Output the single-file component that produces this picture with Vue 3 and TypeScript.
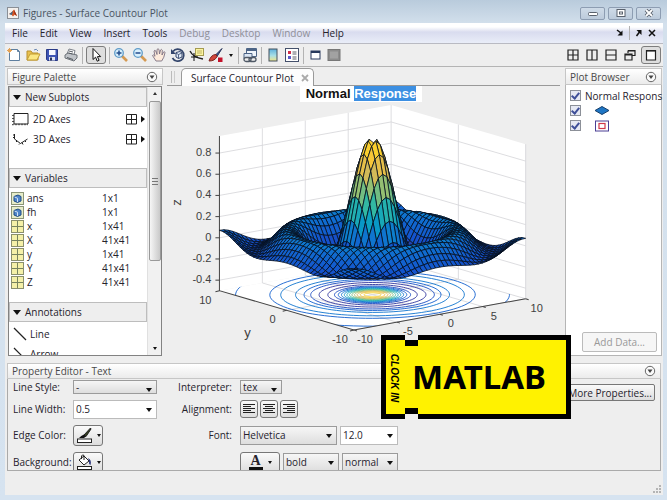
<script setup lang="ts">
import { ref } from 'vue'

type Point = [number, number]

const menus = [
  { label: 'File', off: false },
  { label: 'Edit', off: false },
  { label: 'View', off: false },
  { label: 'Insert', off: false },
  { label: 'Tools', off: false },
  { label: 'Debug', off: true },
  { label: 'Desktop', off: true },
  { label: 'Window', off: true },
  { label: 'Help', off: false },
]

const variables = [
  { name: 'ans', size: '1x1', kind: 'cube' },
  { name: 'fh', size: '1x1', kind: 'cube' },
  { name: 'x', size: '1x41', kind: 'grid' },
  { name: 'X', size: '41x41', kind: 'grid' },
  { name: 'y', size: '1x41', kind: 'grid' },
  { name: 'Y', size: '41x41', kind: 'grid' },
  { name: 'Z', size: '41x41', kind: 'grid' },
]

const showAxes = ref(true)
const showSurface = ref(true)
const showContour = ref(true)

/* Orthographic projection of the axes box */
const zFloor = -0.5
const zTop = 0.96
function project(x: number, y: number, z: number): Point {
  return [
    371.5 + x * 8.55 - y * 6.7,
    294 - x * 1.55 - y * 1.95 - (z - zFloor) * 105.5,
  ]
}
function fmt(points: Point[]): string {
  return points.map((p) => p[0].toFixed(2) + ',' + p[1].toFixed(2)).join(' ')
}

const parula: number[][] = [
  [53, 50, 150], [20, 82, 205], [16, 110, 208], [8, 158, 196],
  [48, 184, 164], [140, 191, 117], [217, 186, 86], [252, 200, 50], [250, 222, 36],
]
function colour(z: number): string {
  const t = Math.max(0, Math.min(0.999, (z + 0.22) / 1.2)) * 8
  const i = Math.floor(t)
  const f = t - i
  const c = parula[i].map((v, k) => Math.round(v + (parula[i + 1][k] - v) * f))
  return `rgb(${c[0]},${c[1]},${c[2]})`
}

function sinc(x: number, y: number): number {
  const r = Math.hypot(x, y)
  return Math.sin(r) / r
}

/* Surface faces, farthest first; the four around the undefined origin drop out */
const faces: { pts: string; fill: string; depth: number }[] = []
for (let i = 0; i < 40; i++) {
  for (let j = 0; j < 40; j++) {
    const x0 = -10 + i * 0.5
    const y0 = -10 + j * 0.5
    const corners: Point[] = [[x0, y0], [x0 + 0.5, y0], [x0 + 0.5, y0 + 0.5], [x0, y0 + 0.5]]
    const zs = corners.map((c) => sinc(c[0], c[1]))
    if (zs.some((z) => Number.isNaN(z))) continue
    faces.push({
      pts: fmt(corners.map((c, k) => project(c[0], c[1], zs[k]))),
      fill: colour(zs.reduce((a, b) => a + b, 0) / 4),
      depth: x0 * 6.7 + y0 * 8.55,
    })
  }
}
faces.sort((a, b) => b.depth - a.depth)

/* Contour radii: crossings of sin(r)/r with each level */
const rings: { pts: string; stroke: string }[] = []
for (let n = -2; n <= 9; n++) {
  const level = n / 10
  for (let r = 0.05; r < 14; r += 0.01) {
    const a = Math.sin(r) / r - level
    const b = Math.sin(r + 0.01) / (r + 0.01) - level
    if (a * b < 0) {
      const pts: Point[] = []
      for (let k = 0; k <= 90; k++) {
        const t = (k / 90) * Math.PI * 2
        pts.push(project(r * Math.cos(t), r * Math.sin(t), zFloor))
      }
      rings.push({ pts: fmt(pts), stroke: colour(level) })
    }
  }
}

const box = (list: number[][]) => fmt(list.map((p) => project(p[0], p[1], p[2])))
const floor = box([[-10, -10, zFloor], [10, -10, zFloor], [10, 10, zFloor], [-10, 10, zFloor]])
const leftWall = box([[-10, 10, zFloor], [10, 10, zFloor], [10, 10, zTop], [-10, 10, zTop]])
const rightWall = box([[10, 10, zFloor], [10, -10, zFloor], [10, -10, zTop], [10, 10, zTop]])

const levels = [-0.4, -0.2, 0, 0.2, 0.4, 0.6, 0.8]
const gridLines: string[] = [
  ...levels.map((z) => box([[-10, 10, z], [10, 10, z], [10, -10, z]])),
  ...[-5, 0, 5, 10].map((x) => box([[x, -10, zFloor], [x, 10, zFloor], [x, 10, zTop]])),
  ...[0, -10].map((y) => box([[-10, y, zFloor], [10, y, zFloor], [10, y, zTop]])),
]
const zTicks = levels.map((z) => {
  const p = project(-10, 10, z)
  return { text: String(z), x: p[0], y: p[1] }
})
const xTicks = [-10, -5, 0, 5, 10].map((x) => {
  const p = project(x, -10, zFloor)
  return { text: String(x), x: p[0], y: p[1] }
})
const yTicks = [-10, 0, 10].map((y) => {
  const p = project(-10, y, zFloor)
  return { text: String(y), x: p[0], y: p[1] }
})
const axisLine = box([[-10, 10, zTop], [-10, 10, zFloor], [-10, -10, zFloor], [10, -10, zFloor]])
</script>

<template>
  <div class="window">
    <header class="titlebar">
      <svg class="logo" viewBox="0 0 12 12"><rect x=".5" y=".5" width="11" height="11" fill="#f4f1ee" stroke="#8a8f96" /><path d="M2 7l2.300-1.500L7 2.500 10 9 7.500 7.800 6 9.500 4.500 7.800z" fill="#d9541e" /><path d="M2 7l2.300-1.500L6 4 5 8z" fill="#3d6a8c" /><path d="M7 2.500L10 9 7.600 7z" fill="#8a2414" /></svg>
      <h1>Figures - Surface Countour Plot</h1>
      <div class="winbtns">
        <button aria-label="Minimize"><svg viewBox="0 0 12 10"><rect x="1.500" y="4.500" width="9" height="3" rx="1" fill="#fff" stroke="#59616c" /></svg></button>
        <button aria-label="Maximize"><svg viewBox="0 0 12 10"><rect x="2" y="1.500" width="8" height="7" fill="#fff" stroke="#59616c" /><rect x="4.500" y="4" width="3" height="2" fill="none" stroke="#59616c" /></svg></button>
        <button aria-label="Close"><svg viewBox="0 0 12 10"><path d="M3 2l6 6M9 2L3 8" stroke="#59616c" stroke-width="3.600" /><path d="M3 2l6 6M9 2L3 8" stroke="#fff" stroke-width="1.800" /></svg></button>
      </div>
    </header>

    <div class="client">
      <nav class="menubar">
        <button v-for="m in menus" :key="m.label" :disabled="m.off">{{ m.label }}</button>
        <div class="menuright">
          <button aria-label="Dock"><svg viewBox="0 0 8 8"><path d="M1 1l4 3" stroke="#111" stroke-width="1.500" /><path d="M6.500 1.500v5h-5z" fill="#111" /></svg></button>
          <i class="sep"></i>
          <button aria-label="Undock"><svg viewBox="0 0 8 8"><path d="M1.500 7l3-4" stroke="#111" stroke-width="1.500" /><path d="M1.500 1h5v5z" fill="#111" /></svg></button>
          <button aria-label="Close figure"><svg viewBox="0 0 8 8"><path d="M1 1l6 6M7 1L1 7" stroke="#111" stroke-width="1.500" /></svg></button>
        </div>
      </nav>

      <div class="toolbar">
        <button aria-label="New"><svg viewBox="0 0 16 16"><path d="M3.500 2.500h8l2 2v9h-10z" fill="#fff" stroke="#5f7f9f" /><path d="M11.500 2.500v2h2" fill="none" stroke="#5f7f9f" /><path d="M3.500 1v5M1 3.500h5M2 2l3 3M5 2L2 5" stroke="#e5a355" /></svg></button>
        <button aria-label="Open"><svg viewBox="0 0 16 16"><path d="M2 13V4h4l1.500 2H13v7z" fill="#e9c04d" stroke="#b8902c" /><path d="M2 13l3-6h10l-3 6z" fill="#fbe782" stroke="#c39c33" /><path d="M9 3q2.500-2 4 1" fill="none" stroke="#6a88b4" /></svg></button>
        <button aria-label="Save"><svg viewBox="0 0 16 16"><path d="M2.500 2.500h11v11h-10l-1-1z" fill="#3d54b4" stroke="#2a3a86" /><rect x="5" y="3" width="6.500" height="5" fill="#f6f8ff" /><rect x="5" y="10" width="6" height="3.500" fill="#dfe4f2" /><rect x="6" y="10.500" width="2" height="3" fill="#26325f" /></svg></button>
        <button aria-label="Print"><svg viewBox="0 0 16 16"><path d="M4 7l2-5 6 1.500L11 8z" fill="#fff" stroke="#7b8088" /><path d="M2 8l3-2 9 2v3l-3 3-9-3z" fill="#bfc3c8" stroke="#6d7279" /><path d="M4 10.500l6 2M6 4l4 1M5.500 6l4 1" stroke="#555b63" /></svg></button>
        <i class="sep"></i>
        <button class="pressed" aria-label="Edit plot"><svg viewBox="0 0 16 16"><path d="M5 1.500v11l2.600-2.300 1.600 4 1.900-.9-1.700-3.700h3.300z" fill="#fff" stroke="#111" /></svg></button>
        <i class="sep"></i>
        <button aria-label="Zoom in"><svg viewBox="0 0 16 16"><path d="M9 9l5 5" stroke="#d59a52" stroke-width="2.600" /><circle cx="6" cy="6" r="4.300" fill="#d9f0fd" stroke="#5f9bc8" stroke-width="1.300" /><path d="M6 3.500v5M3.500 6h5" stroke="#234d8c" stroke-width="1.500" /></svg></button>
        <button aria-label="Zoom out"><svg viewBox="0 0 16 16"><path d="M9 9l5 5" stroke="#d59a52" stroke-width="2.600" /><circle cx="6" cy="6" r="4.300" fill="#d9f0fd" stroke="#5f9bc8" stroke-width="1.300" /><path d="M3.500 6h5" stroke="#234d8c" stroke-width="1.500" /></svg></button>
        <button aria-label="Pan"><svg viewBox="0 0 16 16"><path d="M5 14L1.500 8.500q1-1.500 2.500.8L3 4q1-1.500 1.800 0L6 7.500 6 2.500q1-1.500 2 0L8.500 7l1-4q1-1.300 1.800.2L11 8l1.500-3q1.500-.8 1.500.7-.8 5-3.300 8.300z" fill="#fdebdc" stroke="#7c6f80" stroke-width=".9" /></svg></button>
        <button aria-label="Rotate 3D"><svg viewBox="0 0 16 16"><path d="M3 4.500A6 6 0 1 1 2.500 11" fill="none" stroke="#34466c" stroke-width="1.700" /><path d="M1 2v5h5z" fill="#34466c" /><path d="M6 5.500l4-1 2 1.500v4l-3.500 1.500L6 10z" fill="#e3ecf8" stroke="#34466c" /><path d="M6 6l2.500 1.500L12 6M8.500 7.500v4" fill="none" stroke="#34466c" stroke-width=".8" /></svg></button>
        <button aria-label="Data cursor"><svg viewBox="0 0 16 16"><rect x="6.500" y="1.500" width="8" height="7" fill="#fbf4a0" stroke="#a59b50" /><path d="M8 4h5M8 6h5" stroke="#c0b468" /><path d="M1 4q3 6.500 13 8" fill="none" stroke="#222" stroke-width="1.400" /><path d="M5 6v8M2 10h7" stroke="#111" /></svg></button>
        <button aria-label="Brush"><svg viewBox="0 0 16 16"><path d="M14 1.500L7.500 8l1.500 1.500z" fill="#405a96" stroke="#26345a" /><path d="M8 7.500q-5 0-7 6.500 6 0 8-4.500z" fill="#d2453b" stroke="#7c2520" /><rect x="10" y="10.500" width="4.500" height="4.500" fill="#c4122b" /></svg></button>
        <button class="drop" aria-label="Brush options"><i class="tri"></i></button>
        <i class="sep"></i>
        <button aria-label="Link plot"><svg viewBox="0 0 16 16"><path d="M4.500 1.500h10v8h-10z" fill="#eef4fb" stroke="#4c6486" /><path d="M4.500 3h10" stroke="#4c6486" stroke-width="2" /><path d="M2 6.500h8v5H2z" fill="#dbe6f4" stroke="#4c6486" /><rect x="2" y="10.500" width="7" height="4" rx="2" fill="#eee" stroke="#4f5966" stroke-width="1.300" /><rect x="7" y="10.500" width="7" height="4" rx="2" fill="none" stroke="#4f5966" stroke-width="1.300" /></svg></button>
        <i class="sep"></i>
        <button aria-label="Colorbar"><svg viewBox="0 0 16 16"><defs><linearGradient id="bar" x1="0" y1="0" x2="0" y2="1"><stop offset="0" stop-color="#5eb0dd" /><stop offset=".55" stop-color="#a8dfe6" /><stop offset="1" stop-color="#f0e58a" /></linearGradient></defs><rect x="4" y="2" width="8" height="12" fill="url(#bar)" stroke="#45505c" /></svg></button>
        <button aria-label="Legend"><svg viewBox="0 0 16 16"><rect x="1.500" y="1.500" width="13" height="13" fill="#fff" stroke="#44506b" /><rect x="4" y="4" width="3" height="3" fill="#d02f4b" /><rect x="4" y="9" width="3" height="3" fill="#5858c8" /><path d="M8.500 5h4M8.500 7h4M8.500 10h4M8.500 12h4" stroke="#5d6066" /></svg></button>
        <i class="sep"></i>
        <button aria-label="Hide plot tools"><svg viewBox="0 0 16 16"><rect x="4" y="4" width="9" height="8" fill="#fff" stroke="#28395c" /><path d="M4 5h9" stroke="#28395c" stroke-width="2" /></svg></button>
        <button aria-label="Show plot tools"><svg viewBox="0 0 16 16"><rect x="2" y="2.500" width="12" height="11" fill="#8c8c8c" stroke="#777" /><rect x="4" y="4.500" width="8" height="7" fill="#a2a2a2" /></svg></button>
        <div class="layouts">
          <button aria-label="Tile"><svg viewBox="0 0 16 16"><path d="M3 3h10v10H3zM8 3v10M3 8h10" /></svg></button>
          <button aria-label="Left and right"><svg viewBox="0 0 16 16"><path d="M3 3h10v10H3zM8 3v10" /></svg></button>
          <button aria-label="Top and bottom"><svg viewBox="0 0 16 16"><path d="M3 3h10v10H3zM3 8h10" /></svg></button>
          <button aria-label="Float"><svg viewBox="0 0 16 16"><path d="M6 3.500h7v5h-3M6 3.500V6M6 4h7M3 7h7v6H3zM3 8h7" /></svg></button>
          <button class="pressed" aria-label="Maximize figure"><svg viewBox="0 0 16 16"><path d="M3.500 3.500h9v9.500h-9z" /><path d="M3.500 4h9" stroke-width="2" /></svg></button>
        </div>
      </div>

      <main class="dock">
        <section class="panel palette">
          <h2>Figure Palette<button class="roll" aria-label="Figure Palette actions"><svg viewBox="0 0 12 12"><circle cx="6" cy="6" r="4.700" /><path d="M3.500 4.500h5L6 8z" /></svg></button></h2>
          <div class="palbody">
            <div class="pallist">
              <h3><i class="tri big"></i>New Subplots</h3>
              <ul class="axes">
                <li>
                  <svg class="ax" viewBox="0 0 18 14"><path d="M2 1.500h14v10.500H2z" fill="#fff" stroke="#222" /><path d="M1 3v9.500h15" fill="none" stroke="#222" stroke-dasharray="1 2" stroke-width="1.500" /></svg>2D Axes
                  <button aria-label="Add 2D subplot grid"><svg viewBox="0 0 20 12"><path d="M1.500 1.500h10v9.500h-10zM6.500 1.500V11M1.500 6.500h10" fill="none" stroke="#222" /><path d="M16 3l4 3-4 3.500z" fill="#111" /></svg></button>
                </li>
                <li>
                  <svg class="ax" viewBox="0 0 18 14"><path d="M2.500 2v5l6 4.500 7-4.500" fill="none" stroke="#222" /><path d="M1 3h2M1 5.500h2M4 10l1-1M7 12.500l1-1M11 12.500l-1-2M14 10l-1-1" stroke="#222" /></svg>3D Axes
                  <button aria-label="Add 3D subplot grid"><svg viewBox="0 0 20 12"><path d="M1.500 1.500h10v9.500h-10zM6.500 1.500V11M1.500 6.500h10" fill="none" stroke="#222" /><path d="M16 3l4 3-4 3.500z" fill="#111" /></svg></button>
                </li>
              </ul>
              <h3><i class="tri big"></i>Variables</h3>
              <table>
                <tbody>
                  <tr v-for="v in variables" :key="v.name">
                    <td>
                      <svg v-if="v.kind === 'cube'" viewBox="0 0 13 13"><rect x=".5" y=".5" width="12" height="12" fill="#e7edc9" stroke="#8b9577" /><path d="M3 4.500L7 3l3 1.500v4.500L6.500 10.500 3 9z" fill="#4f86c9" stroke="#1f4a86" /><path d="M3.500 5l3 1.200V10" fill="none" stroke="#cfe1f7" /></svg>
                      <svg v-else viewBox="0 0 13 13"><rect x=".5" y=".5" width="12" height="12" fill="#f5f0a8" stroke="#8b8f6c" /><path d="M6.500 1v11M1 6.500h11" stroke="#77835f" /></svg>
                      {{ v.name }}
                    </td>
                    <td>{{ v.size }}</td>
                  </tr>
                </tbody>
              </table>
              <h3><i class="tri big"></i>Annotations</h3>
              <ul class="notes">
                <li><svg viewBox="0 0 14 14"><path d="M1 1l12 12" stroke="#222" stroke-width="1.200" /></svg>Line</li>
                <li><svg viewBox="0 0 14 14"><path d="M1 1l12 12M13 8v5H8" fill="none" stroke="#222" stroke-width="1.200" /></svg>Arrow</li>
              </ul>
            </div>
            <div class="scroll">
              <i class="tri up"></i>
              <div class="thumb"><i></i></div>
              <i class="tri"></i>
            </div>
          </div>
        </section>

        <section class="figure">
          <div class="tabs">
            <i class="grip"></i>
            <div class="tab">Surface Countour Plot<button aria-label="Close tab"><svg viewBox="0 0 8 8"><path d="M1 1l6 6M7 1L1 7" stroke="#aaa" stroke-width="1.800" /></svg></button></div>
            <i class="rule"></i>
          </div>
          <p class="plottitle"><span>Normal <mark>Response</mark></span></p>
          <svg class="plot" viewBox="164 102 398 253">
            <defs><clipPath id="floorclip"><polygon :points="floor" /></clipPath></defs>
            <g v-if="showAxes">
              <g fill="#fff">
                <polygon :points="floor" /><polygon :points="leftWall" /><polygon :points="rightWall" />
              </g>
              <polyline v-for="(g, i) in gridLines" :key="i" :points="g" class="grid" />
            </g>
            <g v-if="showContour" clip-path="url(#floorclip)">
              <polyline v-for="(r, i) in rings" :key="i" :points="r.pts" :stroke="r.stroke" class="ring" />
            </g>
            <polyline :points="axisLine" class="axis" />
            <g v-if="showSurface" class="surface">
              <polygon v-for="(f, i) in faces" :key="i" :points="f.pts" :fill="f.fill" />
            </g>
            <g class="ticks">
              <g v-for="t in zTicks" :key="t.text">
                <path :d="`M${t.x} ${t.y}h-4`" />
                <text :x="t.x - 8" :y="t.y + 3" text-anchor="end">{{ t.text }}</text>
              </g>
              <g v-for="t in xTicks" :key="t.text">
                <path :d="`M${t.x} ${t.y}l3 1`" />
                <text :x="t.x + 11" :y="t.y + 13" text-anchor="middle">{{ t.text }}</text>
              </g>
              <g v-for="t in yTicks" :key="t.text">
                <path :d="`M${t.x} ${t.y}l-4 1`" />
                <text :x="t.x - 14" :y="t.y + 13" text-anchor="middle">{{ t.text }}</text>
              </g>
              <text class="name" x="247" y="336" text-anchor="middle">y</text>
              <text class="name" transform="translate(181 202) rotate(-90)" text-anchor="middle">z</text>
            </g>
          </svg>
        </section>

        <section class="panel browser">
          <h2>Plot Browser<button class="roll" aria-label="Plot Browser actions"><svg viewBox="0 0 12 12"><circle cx="6" cy="6" r="4.700" /><path d="M3.500 4.500h5L6 8z" /></svg></button></h2>
          <div class="brbody">
            <label><input v-model="showAxes" type="checkbox" /><span>Normal Respons</span></label>
            <label><input v-model="showSurface" type="checkbox" aria-label="Surface" /><svg viewBox="0 0 16 12"><path d="M1 5.500L8 1.500l7 4-7 4z" fill="#1f76c4" stroke="#173f6b" /></svg></label>
            <label><input v-model="showContour" type="checkbox" aria-label="Contour" /><svg viewBox="0 0 16 12"><rect x="1.500" y="1" width="13" height="10" fill="#fff" stroke="#4a3f94" /><rect x="5" y="3.500" width="6" height="5" fill="none" stroke="#d0394a" stroke-width="1.200" /></svg></label>
            <button class="add" disabled>Add Data...</button>
          </div>
        </section>
      </main>

      <section class="panel editor">
        <h2>Property Editor - Text<button class="roll" aria-label="Property Editor actions"><svg viewBox="0 0 12 12"><circle cx="6" cy="6" r="4.700" /><path d="M3.500 4.500h5L6 8z" /></svg></button></h2>
        <div class="edbody">
          <div class="fields left">
            <label for="ls">Line Style:</label>
            <span class="sel short"><select id="ls"><option>-</option><option>--</option></select></span>
            <label for="lw">Line Width:</label>
            <span class="sel white"><select id="lw"><option>0.5</option><option>1.0</option></select></span>
            <label for="ec">Edge Color:</label>
            <button id="ec" class="pick"><svg viewBox="0 0 18 16"><path d="M14.500 1L8 8l2 1.500L15 2z" fill="#35401f" stroke="#222" /><path d="M8 7.500q-3 1-5 3.500h5l2-1.500z" fill="#111" /><rect x="1.500" y="12" width="14" height="3.500" fill="#fff" stroke="#222" /></svg><i class="tri"></i></button>
            <label for="bg">Background:</label>
            <button id="bg" class="pick"><svg viewBox="0 0 18 16"><path d="M3 6l5-4 5 5-5 4z" fill="#fff" stroke="#222" /><path d="M8 6V1.500Q6.500 0 5.500 2v3" fill="none" stroke="#222" /><path d="M12 4q4 2 2.500 7-2-1-1.500-4z" fill="#2a347c" /><rect x="1.500" y="12.500" width="14" height="3" fill="#fff" stroke="#222" /></svg><i class="tri"></i></button>
          </div>
          <div class="fields right">
            <label for="it">Interpreter:</label>
            <span class="sel short tex"><select id="it"><option>tex</option><option>none</option></select></span>
            <span class="lab">Alignment:</span>
            <div class="row tight">
              <button class="al" aria-label="Align left"><svg viewBox="0 0 14 12"><path d="M1 1.500h12M1 3.500h8M1 5.500h12M1 7.500h8M1 9.500h12" /></svg></button>
              <button class="al" aria-label="Align center"><svg viewBox="0 0 14 12"><path d="M1 1.500h12M3 3.500h8M1 5.500h12M3 7.500h8M1 9.500h12" /></svg></button>
              <button class="al" aria-label="Align right"><svg viewBox="0 0 14 12"><path d="M1 1.500h12M5 3.500h8M1 5.500h12M5 7.500h8M1 9.500h12" /></svg></button>
            </div>
            <label for="fn">Font:</label>
            <div class="row">
              <span class="sel font"><select id="fn"><option>Helvetica</option><option>Arial</option></select></span>
              <span class="sel white size"><select aria-label="Font size"><option>12.0</option><option>14.0</option></select></span>
            </div>
            <i></i>
            <div class="row">
              <button class="pick wide" aria-label="Text color"><b>A</b><i class="tri"></i></button>
              <span class="sel wt"><select aria-label="Font weight"><option>bold</option><option>normal</option></select></span>
              <span class="sel wt"><select aria-label="Font angle"><option>normal</option><option>italic</option></select></span>
            </div>
          </div>
          <button class="more">More Properties...</button>
        </div>
      </section>

      <footer class="status">
        <svg viewBox="0 0 10 10"><path d="M7 1h2v2H7zM7 4h2v2H7zM4 4h2v2H4zM7 7h2v2H7zM4 7h2v2H4zM1 7h2v2H1z" fill="#b4b4b4" /></svg>
      </footer>
    </div>

    <svg class="ticket" viewBox="0 0 190 84" role="img" aria-label="MATLAB clock in">
      <path d="M0 0H24V5H37V0H190V84H37V79H24V84H0z" fill="#000" />
      <path d="M5 5H24V11H37V5H185V79H37V73H24V79H5z" fill="#fff200" />
      <text class="tmain" x="98" y="54" text-anchor="middle">MATLAB</text>
      <text class="tside" transform="translate(10 43) rotate(90)" text-anchor="middle">CLOCK IN</text>
    </svg>
  </div>
</template>

<style>
body {
  margin: 0;
}
</style>

<style scoped>
* {
  box-sizing: border-box;
}
.window {
  position: relative;
  display: flex;
  flex-direction: column;
  min-height: 100vh;
  padding: 0 4px 5px 5px;
  background: linear-gradient(#b9cbdc, #d3e0ec 24px, #d6e3f0);
  font: 10px/14px "Open Sans", "Noto Sans", sans-serif;
  color: #26222c;
  overflow: hidden;
}
button, select {
  font: inherit;
  color: inherit;
}
button {
  display: flex;
  align-items: center;
  justify-content: center;
  padding: 0;
  border: 0;
  background: none;
}
h1, h2, h3, ul, p {
  margin: 0;
  padding: 0;
  font-size: 10px;
  font-weight: 400;
  list-style: none;
}
svg {
  display: block;
  flex: none;
}
.titlebar {
  display: flex;
  align-items: center;
  height: 23px;
  padding: 3px 2px 0 2px;
}
.logo {
  width: 12px;
  height: 12px;
}
.titlebar h1 {
  flex: 1;
  padding-left: 4px;
  color: #4a5462;
}
.winbtns {
  display: flex;
  gap: 3px;
}
.winbtns button {
  width: 25px;
  height: 13px;
  border: 1px solid #8d9db2;
  border-radius: 2px;
  background: linear-gradient(#cfdbe8, #bccbdb);
}
.winbtns svg {
  width: 12px;
  height: 10px;
}
.client {
  flex: 1;
  display: flex;
  flex-direction: column;
  background: #eee;
}
.menubar {
  display: flex;
  align-items: center;
  gap: 12px;
  height: 21px;
  padding: 0 7px;
  background: linear-gradient(#fff 20%, #d9dcef 45%, #e9edf8);
  border-bottom: 1px solid #b9bac2;
}
.menubar button:disabled {
  color: #8f8f98;
}
.menuright {
  display: flex;
  align-items: center;
  gap: 5px;
  margin-left: auto;
}
.menuright svg {
  width: 8px;
  height: 8px;
}
.sep {
  width: 1px;
  height: 17px;
  background: #b3b3b3;
}
.menuright .sep {
  height: 14px;
}
.toolbar {
  display: flex;
  align-items: center;
  gap: 3px;
  height: 23px;
  padding: 0 2px 0 1px;
  border-bottom: 1px solid #b4b4b4;
}
.toolbar svg {
  width: 16px;
  height: 16px;
}
.toolbar .pressed {
  width: 20px;
  height: 18px;
  border: 1px solid #7d7d7d;
  border-radius: 3px;
  background: #dedede;
}
.toolbar .drop {
  width: 8px;
}
.layouts {
  display: flex;
  align-items: center;
  gap: 3px;
  margin-left: auto;
}
.layouts path {
  fill: none;
  stroke: #222;
  stroke-width: 1.2;
}
.layouts .pressed path {
  fill: #fff;
}
.tri {
  width: 0;
  height: 0;
  border: solid transparent;
  border-width: 3px 2px 0;
  border-top-color: #111;
}
.tri.big {
  border-width: 5px 4px 0;
  border-top-color: #111;
}
.tri.up {
  border-width: 0 2px 3px;
  border-bottom-color: #333;
}
.dock {
  flex: 1;
  display: flex;
  padding: 1px 1px 0 2px;
}
.panel {
  display: flex;
  flex-direction: column;
}
.panel h2 {
  display: flex;
  align-items: center;
  justify-content: space-between;
  height: 17px;
  padding: 0 4px;
  border: 1px solid #c6c6c6;
  background: linear-gradient(#fff, #ebebeb);
  color: #494949;
}
.roll svg {
  width: 12px;
  height: 12px;
}
.roll circle {
  fill: #fafafa;
  stroke: #666;
}
.roll path {
  fill: #444;
}
.palette {
  width: 156px;
}
.palbody {
  flex: 1 1 0px;
  display: flex;
  min-height: 270px;
  max-height: 270px;
  margin: 1px 1px 0 1px;
  border: 1px solid #828282;
  background: #fff;
}
.pallist {
  flex: 1;
  overflow: hidden;
}
.pallist h3 {
  display: flex;
  align-items: center;
  gap: 4px;
  height: 20px;
  padding-left: 3px;
  border: 1px solid #bdbdbd;
  background: #eee;
}
.axes {
  padding: 2px 2px 0 3px;
  height: 61px;
}
.axes li {
  display: flex;
  align-items: center;
  gap: 3px;
  height: 20px;
}
.ax {
  width: 18px;
  height: 14px;
}
.axes button {
  margin-left: auto;
}
.axes button svg {
  width: 20px;
  height: 12px;
}
table {
  width: 100%;
  margin: 3px 0 13px;
  border-collapse: collapse;
}
td {
  width: 93px;
  height: 14px;
  padding: 0;
  line-height: 14px;
}
td:first-child {
  display: flex;
  align-items: center;
  gap: 3px;
  padding-left: 2px;
}
td svg {
  width: 13px;
  height: 13px;
}
.notes {
  padding: 2px 0 0 4px;
}
.notes li {
  display: flex;
  align-items: center;
  gap: 3px;
  height: 20px;
}
.notes svg {
  width: 14px;
  height: 14px;
}
.scroll {
  display: flex;
  flex-direction: column;
  align-items: center;
  justify-content: space-between;
  width: 14px;
  padding: 5px 0;
  background: #f1f1f1;
  border-left: 1px solid #e0e0e0;
}
.thumb {
  display: flex;
  align-items: center;
  justify-content: center;
  width: 12px;
  height: 160px;
  margin: 6px 0 auto;
  border: 1px solid #999;
  border-radius: 2px;
  background: linear-gradient(90deg, #f6f6f6, #c9c9c9);
}
.thumb i {
  width: 6px;
  height: 7px;
  background: repeating-linear-gradient(#777 0 1px, transparent 1px 3px);
}
.figure {
  flex: 1;
  display: flex;
  flex-direction: column;
  min-width: 0;
}
.tabs {
  display: flex;
  height: 18px;
  padding: 0 5px 0 4px;
}
.grip {
  width: 14px;
  border-bottom: 1px solid #999;
  background: linear-gradient(#bbb, #bbb) 4px 3px / 1px 12px no-repeat, linear-gradient(#ccc, #ccc) 7px 3px / 1px 12px no-repeat;
}
.tab {
  display: flex;
  align-items: center;
  gap: 7px;
  padding: 0 4px 0 9px;
  border: 1px solid #999;
  border-bottom: 0;
  border-radius: 5px 5px 0 0;
  background: #fdfdfd;
}
.tab svg {
  width: 8px;
  height: 8px;
}
.rule {
  flex: 1;
  border-bottom: 1px solid #999;
}
.plottitle {
  text-align: center;
  padding-right: 6px;
  font: bold 13px/16px "Liberation Sans", Arial, sans-serif;
  color: #111;
}
.plottitle span {
  display: inline-block;
  padding: 0 6px;
  background: #fff;
}
mark {
  background: #3c8fe2;
  color: #fff;
}
.plot {
  flex: 1 1 0px;
  width: 100%;
  height: 0;
  min-height: 253px;
}
.grid {
  fill: none;
  stroke: #d4d4d8;
  stroke-width: 0.8;
}
.ring {
  fill: none;
  stroke-width: 0.9;
}
.axis, .ticks path {
  fill: none;
  stroke: #444;
}
.surface {
  stroke: #06101f;
  stroke-width: 0.8;
  stroke-linejoin: round;
}
.ticks text {
  font: 11px "Liberation Sans", Arial, sans-serif;
  fill: #404040;
}
.ticks .name {
  font-size: 13px;
}
.browser {
  width: 97px;
}
.brbody {
  flex: 1;
  display: flex;
  flex-direction: column;
  padding: 3px 0 2px 4px;
  border: 1px solid #b5b5b5;
  border-top: 0;
  background: #fff;
}
.brbody label {
  display: flex;
  align-items: center;
  gap: 4px;
  height: 15px;
  white-space: nowrap;
}
.brbody label svg {
  width: 16px;
  height: 12px;
  margin-left: 9px;
}
.brbody input {
  appearance: none;
  flex: none;
  display: grid;
  place-items: center;
  width: 11px;
  height: 11px;
  margin: 0;
  border: 1px solid #8c9098;
  background: #e6e9f3;
}
.brbody input:checked::after {
  content: "";
  width: 3px;
  height: 6px;
  margin-bottom: 2px;
  border: solid #3f4f98;
  border-width: 0 2px 2px 0;
  transform: rotate(40deg);
}
.add {
  width: 75px;
  height: 20px;
  margin: auto 4px 1px auto;
  border: 1px solid #bbb;
  border-radius: 2px;
  background: #f6f6f6;
}
.add:disabled {
  color: #999;
}
.editor {
  margin: 7px 2px 0 2px;
}
.editor h2 {
  height: 16px;
}
.edbody {
  display: flex;
  align-items: flex-start;
  height: 92px;
  padding: 1px 5px 0;
  overflow: hidden;
  border: 1px solid #aaa;
  border-top: 0;
}
.fields {
  display: grid;
  grid-template-rows: 14px 20px 22px 22px;
  row-gap: 5px;
  align-items: center;
}
.fields label {
  white-space: nowrap;
}
.left {
  grid-template-columns: 60px 84px;
}
.right {
  grid-template-columns: 75px auto;
  column-gap: 8px;
}
.right label, .lab {
  text-align: right;
}
.sel {
  position: relative;
  display: block;
  width: 100%;
  height: 19px;
}
.sel::after {
  content: "";
  position: absolute;
  right: 5px;
  top: 8px;
  border: solid transparent;
  border-width: 4px 3px 0;
  border-top-color: #111;
  pointer-events: none;
}
.sel select {
  appearance: none;
  display: block;
  width: 100%;
  height: 100%;
  padding: 0 2px;
  border: 1px solid #9b9b9b;
  border-radius: 0;
  background: linear-gradient(#f6f6f6, #dedede);
  line-height: 12px;
}
.sel.white select {
  background: #fff;
  border-color: #bbb;
}
.sel.short {
  height: 14px;
}
.sel.tex {
  width: 42px;
}
.sel.font {
  width: 97px;
}
.sel.size {
  width: 58px;
}
.sel.wt {
  width: 56px;
}
.row {
  display: flex;
  align-items: center;
  gap: 3px;
}
.row.tight {
  gap: 2px;
}
.pick {
  gap: 3px;
  width: 30px;
  height: 21px;
  border: 1px solid #777;
  border-radius: 3px;
  background: linear-gradient(#fafafa, #ddd);
}
.pick.wide {
  width: 40px;
  gap: 5px;
}
.pick svg {
  width: 18px;
  height: 16px;
}
.pick b {
  width: 14px;
  border-bottom: 3px solid #111;
  font: bold 14px/12px "Liberation Serif", serif;
}
.al {
  width: 18px;
  height: 18px;
  border: 1px solid #777;
  border-radius: 3px;
  background: linear-gradient(#fafafa, #ddd);
}
.al svg {
  width: 14px;
  height: 12px;
}
.al path {
  stroke: #222;
}
.more {
  width: 90px;
  height: 17px;
  margin: 4px 0 0 auto;
  border: 1px solid #777;
  border-radius: 2px;
  background: linear-gradient(#fafafa, #ddd);
  white-space: nowrap;
}
.status {
  display: flex;
  align-items: flex-end;
  justify-content: flex-end;
  height: 24px;
  padding: 1px;
}
.status svg {
  width: 10px;
  height: 10px;
}
.ticket {
  position: absolute;
  right: 96px;
  bottom: 81px;
  width: 190px;
  height: 84px;
}
.tmain {
  font: bold 33px "Noto Sans", "Open Sans", sans-serif;
}
.tside {
  font: italic bold 10px "Liberation Sans", Arial, sans-serif;
}
</style>
